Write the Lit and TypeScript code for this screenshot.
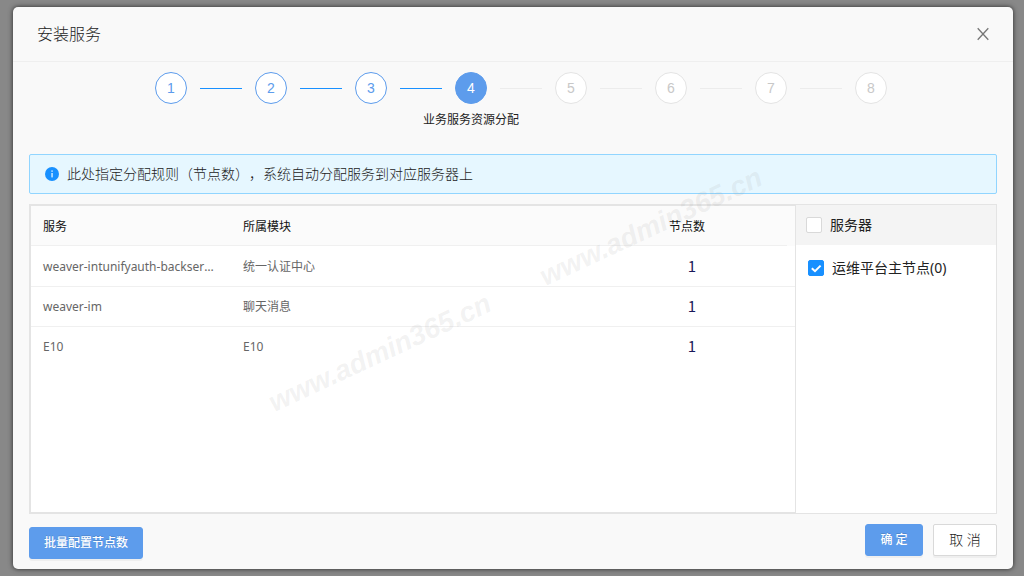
import { LitElement, html, css, svg } from "lit";
import { customElement, property, state } from "lit/decorators.js";
import { classMap } from "lit/directives/class-map.js";

interface ServiceRow {
  name: string;
  module: string;
  nodes: number;
}

@customElement("step-bar")
class StepBar extends LitElement {
  @property({ type: Number }) current = 1;
  @property({ type: Number }) total = 8;
  @property() label = "";

  static styles = css`
    :host {
      display: block;
    }
    .steps {
      display: flex;
      justify-content: center;
      list-style: none;
      margin: 0;
      padding: 0 0 0 16px;
    }
    .step {
      display: flex;
      flex-direction: column;
      align-items: center;
      width: 32px;
    }
    .line {
      width: 42px;
      height: 1px;
      margin: 16px 13px 0;
      background: #ececec;
    }
    .line.done {
      background: #1890ff;
    }
    .dot {
      box-sizing: border-box;
      width: 32px;
      height: 32px;
      border: 1px solid #e4e4e4;
      border-radius: 50%;
      background: #fff;
      color: #c8c8c8;
      font-family: "Liberation Sans", sans-serif;
      font-size: 14px;
      line-height: 30px;
      text-align: center;
    }
    .dot.done {
      border-color: #5d9cec;
      color: #5d9cec;
    }
    .dot.active {
      border-color: #5d9cec;
      background: #5d9cec;
      color: #fff;
    }
    .label {
      margin-top: 7px;
      font-size: 12px;
      line-height: 18px;
      color: #222;
      white-space: nowrap;
    }
  `;

  render() {
    const steps = Array.from({ length: this.total }, (_, i) => i + 1);
    return html`
      <ol class="steps">
        ${steps.map(
          (n) => html`
            ${n > 1
              ? html`<li
                  class=${classMap({ line: true, done: n <= this.current })}
                  role="presentation"
                ></li>`
              : ""}
            <li class="step">
              <span
                class=${classMap({
                  dot: true,
                  done: n < this.current,
                  active: n === this.current,
                })}
                >${n}</span
              >
              ${n === this.current
                ? html`<span class="label">${this.label}</span>`
                : ""}
            </li>
          `
        )}
      </ol>
    `;
  }
}

@customElement("app-root")
class AppRoot extends LitElement {
  @state() private rows: ServiceRow[] = [
    { name: "weaver-intunifyauth-backserver", module: "统一认证中心", nodes: 1 },
    { name: "weaver-im", module: "聊天消息", nodes: 1 },
    { name: "E10", module: "E10", nodes: 1 },
  ];

  static styles = css`
    :host {
      display: flex;
      box-sizing: border-box;
      min-height: 100vh;
      padding: 7px 11px 7px 13px;
      background: #888;
      font-family: "Noto Sans", "Noto Sans CJK SC", sans-serif;
      font-size: 12px;
      color: #222;
    }
    .dialog {
      position: relative;
      display: flex;
      flex-direction: column;
      flex: 1;
      min-width: 0;
      border-radius: 5px;
      background: #f9f9f9;
      box-shadow: 0 0 5px rgba(0, 0, 0, 0.7);
    }
    .header {
      display: flex;
      align-items: center;
      justify-content: space-between;
      height: 54px;
      padding: 0 24px;
      border-bottom: 1px solid #efefef;
    }
    .title {
      margin: 0;
      font-size: 16px;
      font-weight: 300;
      line-height: 24px;
    }
    .close {
      display: flex;
      padding: 0;
      border: 0;
      background: none;
      cursor: pointer;
    }
    .body {
      display: flex;
      flex-direction: column;
      flex: 1;
      padding: 10px 16px;
    }
    .steps {
      height: 82px;
    }
    .alert {
      display: flex;
      align-items: center;
      gap: 8px;
      height: 38px;
      padding: 0 15px;
      border: 1px solid #91d5ff;
      border-radius: 2px;
      background: #e6f7ff;
      font-size: 14px;
      line-height: 20px;
    }
    .notice {
      margin: 0;
      padding-bottom: 2px;
      font-weight: 300;
      text-spacing-trim: space-all;
    }
    .punct {
      font-family: "Noto Sans CJK TC", sans-serif;
    }
    .panel {
      display: flex;
      flex: 1;
      margin: 10px 0;
      border: 1px solid #e4e4e4;
      background: #fff;
    }
    .main {
      flex: 1;
      min-width: 0;
      border: 1px solid #e4e4e4;
    }
    .table {
      width: 100%;
      border-collapse: separate;
      border-spacing: 0;
      table-layout: fixed;
    }
    .table th,
    .table td {
      box-sizing: border-box;
      height: 40px;
      padding: 0 12px;
      overflow: hidden;
      text-align: left;
      text-overflow: ellipsis;
      white-space: nowrap;
      line-height: 18px;
    }
    .table th {
      padding-top: 2px;
      border-bottom: 1px solid #f0f0f0;
      background: #fbfbfb;
      font-weight: 400;
      color: #111;
    }
    .table td {
      border-top: 1px solid #f0f0f0;
      color: #666;
    }
    .table tr:first-child td {
      border-top-color: transparent;
    }
    .name {
      width: 200px;
    }
    .table .count {
      width: 208px;
      text-align: center;
    }
    .table th.count {
      padding-right: 20px;
      border-bottom-color: transparent;
      background: linear-gradient(#f0f0f0, #f0f0f0) 0 100% /
        calc(100% - 8px) 1px no-repeat border-box #fbfbfb;
    }
    .table td.count {
      padding-bottom: 2px;
      padding-left: 14px;
      font-family: "Noto Sans CJK SC", sans-serif;
      font-size: 15px;
      color: #1a1a5a;
    }
    .side {
      width: 200px;
      font-size: 14px;
    }
    .check {
      display: flex;
      align-items: center;
      gap: 8px;
      line-height: 20px;
    }
    .all {
      height: 40px;
      padding-left: 10px;
      background: #f4f4f4;
    }
    .server {
      padding: 13px 12px;
    }
    .box {
      appearance: none;
      flex: none;
      box-sizing: border-box;
      width: 16px;
      height: 16px;
      margin: 0;
      border: 1px solid #d9d9d9;
      border-radius: 2px;
      background: #fff;
    }
    .box:checked {
      border-color: #1890ff;
      background: #1890ff
        url("data:image/svg+xml,%3Csvg xmlns='http://www.w3.org/2000/svg' viewBox='0 0 14 14'%3E%3Cpath d='M2.8 7.2 6 10.2 11.6 4.6' fill='none' stroke='white' stroke-width='2'/%3E%3C/svg%3E")
        center / 14px 14px no-repeat;
    }
    .footer {
      display: flex;
      gap: 10px;
      height: 35px;
    }
    .btn {
      box-sizing: border-box;
      min-width: 58px;
      height: 32px;
      padding: 0 14px;
      border: 1px solid #5d9cec;
      border-radius: 3px;
      background: #5d9cec;
      box-shadow: 0 2px 0 rgba(0, 0, 0, 0.04);
      color: #fff;
      font-family: inherit;
      font-size: 12px;
      font-weight: 500;
      line-height: 20px;
      text-shadow: 0 -1px 0 rgba(0, 0, 0, 0.12);
      cursor: pointer;
    }
    .batch {
      align-self: flex-end;
      margin-right: auto;
    }
    .plain {
      min-width: 64px;
      border-color: #d9d9d9;
      border-radius: 2px;
      background: #fff;
      color: #222;
      font-size: 14px;
      font-weight: 300;
      text-shadow: none;
    }
    .watermarks {
      position: absolute;
      inset: 0;
      overflow: hidden;
      pointer-events: none;
    }
    .mark {
      position: absolute;
      color: rgba(160, 160, 160, 0.14);
      font-family: "Liberation Sans", sans-serif;
      font-size: 28px;
      font-style: italic;
      font-weight: 700;
      line-height: 30px;
      white-space: nowrap;
      transform: translate(-50%, -50%) rotate(-25deg);
    }
    .low {
      left: 367px;
      top: 346px;
    }
    .high {
      left: 638px;
      top: 220px;
    }
  `;

  private infoIcon = svg`<svg width="14" height="14" viewBox="0 0 14 14" aria-hidden="true">
    <circle cx="7" cy="7" r="7" fill="#1890ff" />
    <rect x="6.4" y="3.4" width="1.3" height="1.4" fill="#e6f7ff" />
    <rect x="6.4" y="6" width="1.3" height="4.4" fill="#e6f7ff" />
  </svg>`;

  render() {
    return html`
      <section class="dialog" role="dialog" aria-labelledby="title">
        <header class="header">
          <h1 class="title" id="title">安装服务</h1>
          <button class="close" aria-label="关闭">
            <svg width="12" height="14" viewBox="0 0 12 14">
              <path
                d="M0.7 1.2 11.3 12.8M11.3 1.2 0.7 12.8"
                fill="none"
                stroke="#777"
                stroke-width="1.3"
              />
            </svg>
          </button>
        </header>
        <div class="body">
          <step-bar
            class="steps"
            .current=${4}
            .total=${8}
            label="业务服务资源分配"
          ></step-bar>
          <div class="alert" role="note">
            ${this.infoIcon}
            <p class="notice">此处指定分配规则<span class="punct">（</span>节点数<span class="punct">）</span>，系统自动分配服务到对应服务器上</p>
          </div>
          <div class="panel">
            <div class="main">
              <table class="table">
                <thead>
                  <tr>
                    <th class="name">服务</th>
                    <th>所属模块</th>
                    <th class="count">节点数</th>
                  </tr>
                </thead>
                <tbody>
                  ${this.rows.map(
                    (r) => html`<tr>
                      <td>${r.name}</td>
                      <td>${r.module}</td>
                      <td class="count">${r.nodes}</td>
                    </tr>`
                  )}
                </tbody>
              </table>
            </div>
            <div class="side">
              <label class="check all">
                <input class="box" type="checkbox" />服务器
              </label>
              <label class="check server">
                <input class="box" type="checkbox" checked />运维平台主节点(0)
              </label>
            </div>
          </div>
          <footer class="footer">
            <button class="btn batch">批量配置节点数</button>
            <button class="btn">确 定</button>
            <button class="btn plain">取 消</button>
          </footer>
        </div>
        <div class="watermarks" aria-hidden="true">
          <span class="mark low">www.admin365.cn</span>
          <span class="mark high">www.admin365.cn</span>
        </div>
      </section>
    `;
  }
}
